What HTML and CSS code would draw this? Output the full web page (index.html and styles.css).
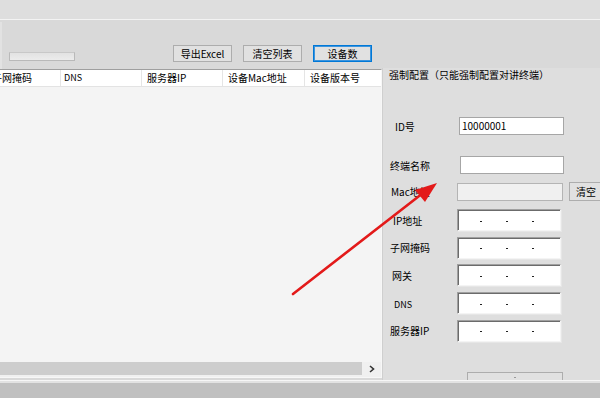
FILE: index.html
```html
<!DOCTYPE html>
<html lang="zh-CN">
<head>
<meta charset="utf-8">
<title>设备配置</title>
<link rel="stylesheet" href="styles.css">
</head>
<body>
<div class="app">
  <div class="topband"></div>
  <div class="main">
    <div class="left">
      <div class="toolbar">
        <div class="combo"></div>
        <div class="btns">
          <button class="btn">导出Excel</button>
          <button class="btn">清空列表</button>
          <button class="btn btn-focus">设备数</button>
        </div>
      </div>
      <div class="table">
        <div class="thead">
          <div class="th th-1"><span class="clip">子网掩码</span></div>
          <div class="th th-2 th-tight">DNS</div>
          <div class="th th-3">服务器IP</div>
          <div class="th th-4">设备Mac地址</div>
          <div class="th th-5">设备版本号</div>
        </div>
        <div class="tbody"></div>
        <div class="hscroll">
          <div class="track"></div>
          <div class="arrowbtn">
            <svg width="6" height="8" viewBox="0 0 6 8"><path d="M1 1 L4.5 4 L1 7" fill="none" stroke="#333" stroke-width="1.6"/></svg>
          </div>
        </div>
      </div>
    </div>
    <div class="right">
      <div class="panel">
        <div class="title">强制配置（只能强制配置对讲终端）</div>
        <div class="row row-id">
          <div class="lbl lbl-w76"><span class="pl-12">ID号</span></div>
          <div class="input input-id">10000001</div>
        </div>
        <div class="row row-name">
          <div class="lbl lbl-w77"><span class="pl-7">终端名称</span></div>
          <div class="input input-name"></div>
        </div>
        <div class="row row-mac">
          <div class="lbl lbl-w74"><span class="pl-8">Mac地址</span></div>
          <div class="input input-mac"></div>
          <button class="btn btn-clear">清空</button>
        </div>
        <div class="ipgroup">
          <div class="row">
            <div class="lbl lbl-w74"><span class="pl-10">IP地址</span></div>
            <div class="ipbox"><i></i><i></i><i></i></div>
          </div>
          <div class="row">
            <div class="lbl lbl-w74"><span class="pl-7">子网掩码</span></div>
            <div class="ipbox"><i></i><i></i><i></i></div>
          </div>
          <div class="row">
            <div class="lbl lbl-w74"><span class="pl-9">网关</span></div>
            <div class="ipbox"><i></i><i></i><i></i></div>
          </div>
          <div class="row">
            <div class="lbl lbl-w74"><span class="pl-11">DNS</span></div>
            <div class="ipbox"><i></i><i></i><i></i></div>
          </div>
          <div class="row">
            <div class="lbl lbl-w74"><span class="pl-7">服务器IP</span></div>
            <div class="ipbox"><i></i><i></i><i></i></div>
          </div>
        </div>
        <div class="row row-last">
          <div class="btn btn-bottom"><i class="tick"></i></div>
        </div>
      </div>
    </div>
  </div>
  <div class="footer"></div>
  <svg class="annot" width="600" height="398" viewBox="0 0 600 398">
    <line x1="293" y1="294" x2="423" y2="193" stroke="#e31a1a" stroke-width="2.6" stroke-linecap="round"/>
    <polygon points="437,183 415,190 425,202" fill="#e31a1a"/>
  </svg>
</div>
</body>
</html>
```
FILE: styles.css
```css
html, body {
  margin: 0;
  padding: 0;
  overflow: hidden;
}
body {
  font-family: "Noto Sans CJK SC", "Liberation Sans", sans-serif;
  font-size: 10px;
  color: #000;
}
.app {
  position: relative;
  width: 600px;
  height: 398px;
  overflow: hidden;
  background: #d9d9d9;
}
.topband {
  height: 19px;
  background: #dedede;
  border-bottom: 1px solid #f3f3f3;
}
.main {
  display: flex;
  height: 360px;
}
.left {
  flex: none;
  width: 382px;
  display: flex;
  flex-direction: column;
}
.toolbar {
  height: 47px;
  margin-top: 2px;
  display: flex;
  align-items: flex-end;
  padding-left: 7px;
  padding-bottom: 7px;
  box-sizing: border-box;
  border-left: 2px solid #e2e2e2;
}
.combo {
  width: 66px;
  height: 9px;
  background: linear-gradient(#e2e2e2, #ececec);
  border: 1px solid #b9b9b9;
  border-top-color: #c8c8c8;
  margin-bottom: 1px;
  box-sizing: border-box;
}
.btns {
  display: flex;
  gap: 11px;
  margin-left: 98px;
}
.btn {
  font-family: "Noto Sans CJK SC", "Liberation Sans", sans-serif;
  font-size: 10px;
  color: #000;
  background: #e1e1e1;
  border: 1px solid #adadad;
  width: 59px;
  height: 17px;
  padding: 0;
  line-height: 15px;
  text-align: center;
  box-sizing: border-box;
}
.btn-focus {
  border-color: #0078d7;
  box-shadow: inset 0 0 0 1px #3c94dd;
}
.table {
  height: 309px;
  border-top: 1px solid #9f9f9f;
  border-bottom: 1px solid #f7f7f7;
  border-right: 1px solid #f7f7f7;
  box-sizing: border-box;
  display: flex;
  flex-direction: column;
  background: #f4f4f4;
}
.thead {
  display: flex;
  height: 17px;
  background: #fff;
  border-bottom: 1px solid #e3e3e3;
  box-sizing: border-box;
  overflow: hidden;
}
.th {
  height: 16px;
  line-height: 16px;
  padding-left: 5px;
  border-right: 1px solid #e5e5e5;
  box-sizing: border-box;
  white-space: nowrap;
  overflow: hidden;
}
.th-tight { padding-left: 3px; font-size: 9px; }
.th-1 { width: 61px; padding-left: 0; }
.th-2 { width: 81px; }
.th-3 { width: 81px; }
.th-4 { width: 82px; }
.th-5 { flex: 1; border-right: 0; }
.clip { margin-left: -8px; }
.tbody {
  flex: 1;
}
.hscroll {
  height: 15px;
  display: flex;
  background: #f0f0f0;
}
.track {
  width: 362px;
  height: 13px;
  background: #cdcdcd;
}
.arrowbtn {
  flex: 1;
  display: flex;
  align-items: flex-start;
  justify-content: center;
  padding-top: 3px;
}
.right {
  flex: 1;
  min-width: 0;
  display: flex;
  flex-direction: column;
  padding-top: 48px;
}
.panel {
  flex: 1;
  background: #dedede;
  border-left: 1px solid #cfcfcf;
  overflow: hidden;
  display: flex;
  flex-direction: column;
}
.title {
  margin-top: 1px;
  padding-left: 6px;
  height: 12px;
  line-height: 12px;
  white-space: nowrap;
}
.row {
  display: flex;
  align-items: center;
  white-space: nowrap;
}
.row-id { margin-top: 36px; }
.row-name { margin-top: 21px; }
.row-mac { margin-top: 8px; }
.row-last { margin-top: 30px; padding-left: 84px; align-items: flex-start; }
.lbl { box-sizing: border-box; flex: none; }
.lbl-w74 { width: 74px; }
.lbl-w76 { width: 76px; }
.lbl-w77 { width: 77px; }
.pl-7 { padding-left: 7px; }
.pl-8 { padding-left: 8px; }
.pl-9 { padding-left: 9px; }
.pl-10 { padding-left: 10px; }
.pl-11 { padding-left: 11px; font-size: 9px; }
.pl-12 { padding-left: 12px; }
.input {
  flex: none;
  height: 18px;
  background: #fff;
  border: 1px solid #a6a6a6;
  box-sizing: border-box;
  line-height: 16px;
  padding-left: 2px;
}
.input-id { width: 105px; }
.input-name { width: 104px; }
.input-mac {
  width: 106px;
  background: #f0f0f0;
  border-color: #b4b4b4;
}
.btn-clear {
  flex: none;
  margin-left: 6px;
  width: 40px;
  height: 19px;
  padding-right: 6px;
  line-height: 17px;
}
.ipgroup {
  margin-top: 8px;
  display: flex;
  flex-direction: column;
  gap: 5.7px;
}
.ipbox {
  flex: none;
  width: 104px;
  height: 22px;
  background: #fff;
  box-sizing: border-box;
  border-top: 1px solid #a0a0a0;
  border-left: 1px solid #a0a0a0;
  border-right: 1px solid #f4f4f4;
  border-bottom: 1px solid #f4f4f4;
  box-shadow: inset 1px 1px 0 #6b6b6b, 1px 1px 0 #e6e6e6;
  display: flex;
  align-items: center;
  gap: 24px;
  padding-left: 22px;
  padding-top: 2px;
}
.ipbox i {
  display: block;
  width: 2px;
  height: 1px;
  background: #222;
}
.btn-bottom {
  flex: none;
  width: 96px;
  height: 22px;
  display: flex;
  justify-content: center;
  padding-top: 4px;
}
.tick {
  display: block;
  width: 2px;
  height: 1px;
  background: #999;
}
.footer {
  height: 18px;
  box-sizing: border-box;
  border-top: 1px solid #f6f6f6;
  background: linear-gradient(#e2e2e2 0, #e2e2e2 2px, #c0c0c0 2px);
}
.annot {
  position: absolute;
  left: 0;
  top: 0;
  pointer-events: none;
}
```
